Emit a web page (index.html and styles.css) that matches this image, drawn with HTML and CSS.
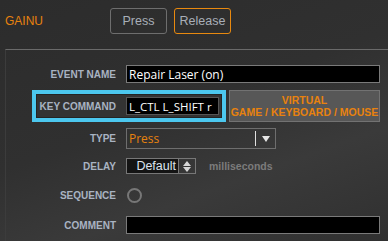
FILE: index.html
```html
<!DOCTYPE html>
<html lang="en">
<head>
    <meta charset="UTF-8">
    <meta name="viewport" content="width=device-width, initial-scale=1.0">
    <title>Event Editor</title>
    <link rel="stylesheet" href="styles.css">
</head>
<body>

<div class="header">
  <span class="group-name">GAINU</span>
  <div class="tabs">
    <button class="tab">Press</button>
    <button class="tab active">Release</button>
  </div>
</div>

<div class="panel">
  <div class="row row-name">
    <label class="label">EVENT NAME</label>
    <input class="field wide" type="text" value="Repair Laser (on)">
  </div>

  <div class="row row-key">
    <div class="highlight">
      <label class="label">KEY COMMAND</label>
      <input class="field key" type="text" value="L_CTL L_SHIFT r">
    </div>
    <button class="virtual">VIRTUAL<br>GAME / KEYBOARD / MOUSE</button>
  </div>

  <div class="row row-type">
    <label class="label">TYPE</label>
    <div class="select">
      <span class="select-value">Press</span>
      <span class="select-arrow"></span>
    </div>
  </div>

  <div class="row row-delay">
    <label class="label">DELAY</label>
    <div class="spinner">
      <span class="spinner-value">Default</span>
      <span class="spinner-btn">
        <span class="up"></span>
        <span class="down"></span>
      </span>
    </div>
    <span class="unit">milliseconds</span>
  </div>

  <div class="row row-seq">
    <label class="label">SEQUENCE</label>
    <span class="radio"></span>
  </div>

  <div class="row row-comment">
    <label class="label">COMMENT</label>
    <input class="field wide" type="text" value="">
  </div>
</div>

</body>
</html>
```

FILE: styles.css
```css
body {
    margin: 0;
    width: 388px;
    height: 241px;
    overflow: hidden;
    font-family: "Liberation Sans", Arial, sans-serif;
    background: linear-gradient(160deg, #2c2c2c 0%, #303030 45%, #3a3a3a 70%, #303030 100%);
}
.header {
    display: flex;
    align-items: center;
    height: 49px;
    padding-left: 5px;
}
.group-name {
    color: #e8820e;
    font-size: 12px;
    width: 105px;
    margin-top: -7px;
}
.tabs {
    display: flex;
    gap: 7px;
    margin-top: -7px;
}
.tab {
    width: 57px;
    height: 26px;
    background: transparent;
    border: 1px solid #6e6e6e;
    border-radius: 3px;
    color: #a8aeb8;
    font-family: "Liberation Sans", Arial, sans-serif;
    font-size: 12.5px;
    padding: 0;
}
.tab.active {
    border-color: #e8890f;
}
.panel {
    margin-left: 5px;
    border-top: 1px solid #6a6a6a;
    border-left: 1px solid #3c3c3c;
    height: 192px;
}
.row {
    display: flex;
    align-items: center;
}
.label {
    width: 110px;
    text-align: right;
    color: #a9b3c2;
    font-size: 10px;
    font-weight: bold;
    margin-right: 10px;
    flex-shrink: 0;
    white-space: nowrap;
}
.field {
    box-sizing: border-box;
    height: 18px;
    background: #000;
    border: 1px solid #7a7a7a;
    color: #fff;
    font-family: "Open Sans", sans-serif;
    font-size: 12px;
    padding: 0 2px;
    outline: none;
}
.wide {
    width: 254px;
}
.row-name {
    margin-top: 15px;
}
.row-key {
    margin-top: 7px;
}
.highlight {
    display: flex;
    align-items: center;
    box-sizing: border-box;
    width: 194px;
    height: 32px;
    margin-left: 26px;
    border: 4px solid #4cc7ee;
    background: #333;
    box-shadow: inset 0 0 0 1px #242424;
}
.highlight .label {
    width: auto;
    flex: 1;
}
.field.key {
    width: 93px;
    border-color: #555;
    font-size: 11.5px;
    flex-shrink: 0;
}
.highlight .field {
    margin-right: 3px;
}
.virtual {
    box-sizing: border-box;
    width: 151px;
    height: 32px;
    margin-left: 3px;
    background: #575757;
    border: 1px solid #727272;
    color: #e8820e;
    font-family: "Liberation Sans", Arial, sans-serif;
    font-weight: bold;
    font-size: 10.5px;
    line-height: 12px;
    padding: 0;
}
.row-type {
    margin-top: 6px;
}
.select {
    box-sizing: border-box;
    width: 150px;
    height: 21px;
    border: 1px solid #6e6e6e;
    display: flex;
    align-items: center;
}
.select-value {
    color: #e8820e;
    font-family: "Open Sans", sans-serif;
    font-size: 12px;
    padding-left: 2px;
    flex: 1;
}
.select-arrow {
    width: 19px;
    height: 15px;
    border-left: 1px solid #e0e0e0;
    position: relative;
}
.select-arrow::after {
    content: "";
    position: absolute;
    left: 6px;
    top: 5px;
    border-left: 4px solid transparent;
    border-right: 4px solid transparent;
    border-top: 6px solid #e6e6e6;
}
.row-delay {
    margin-top: 9px;
}
.spinner {
    display: flex;
    height: 16px;
}
.spinner-value {
    box-sizing: border-box;
    width: 53px;
    height: 16px;
    background: #141414;
    border: 1px solid #777;
    color: #dde4ee;
    font-size: 12.5px;
    text-align: right;
    padding-right: 2px;
    line-height: 14px;
}
.spinner-btn {
    box-sizing: border-box;
    width: 17px;
    height: 16px;
    border: 1px solid #777;
    border-left: none;
    display: flex;
    flex-direction: column;
    align-items: center;
    justify-content: center;
    gap: 1px;
}
.spinner-btn .up {
    border-left: 4px solid transparent;
    border-right: 4px solid transparent;
    border-bottom: 5px solid #d8d8d8;
}
.spinner-btn .down {
    border-left: 4px solid transparent;
    border-right: 4px solid transparent;
    border-top: 5px solid #d8d8d8;
}
.unit {
    color: #7c7c7c;
    font-size: 10.5px;
    font-weight: bold;
    margin-left: 13px;
}
.row-seq {
    margin-top: 14px;
}
.radio {
    box-sizing: border-box;
    width: 15px;
    height: 15px;
    border: 2px solid #777;
    border-radius: 50%;
    margin-left: 1px;
}
.row-comment {
    margin-top: 13px;
}
```
